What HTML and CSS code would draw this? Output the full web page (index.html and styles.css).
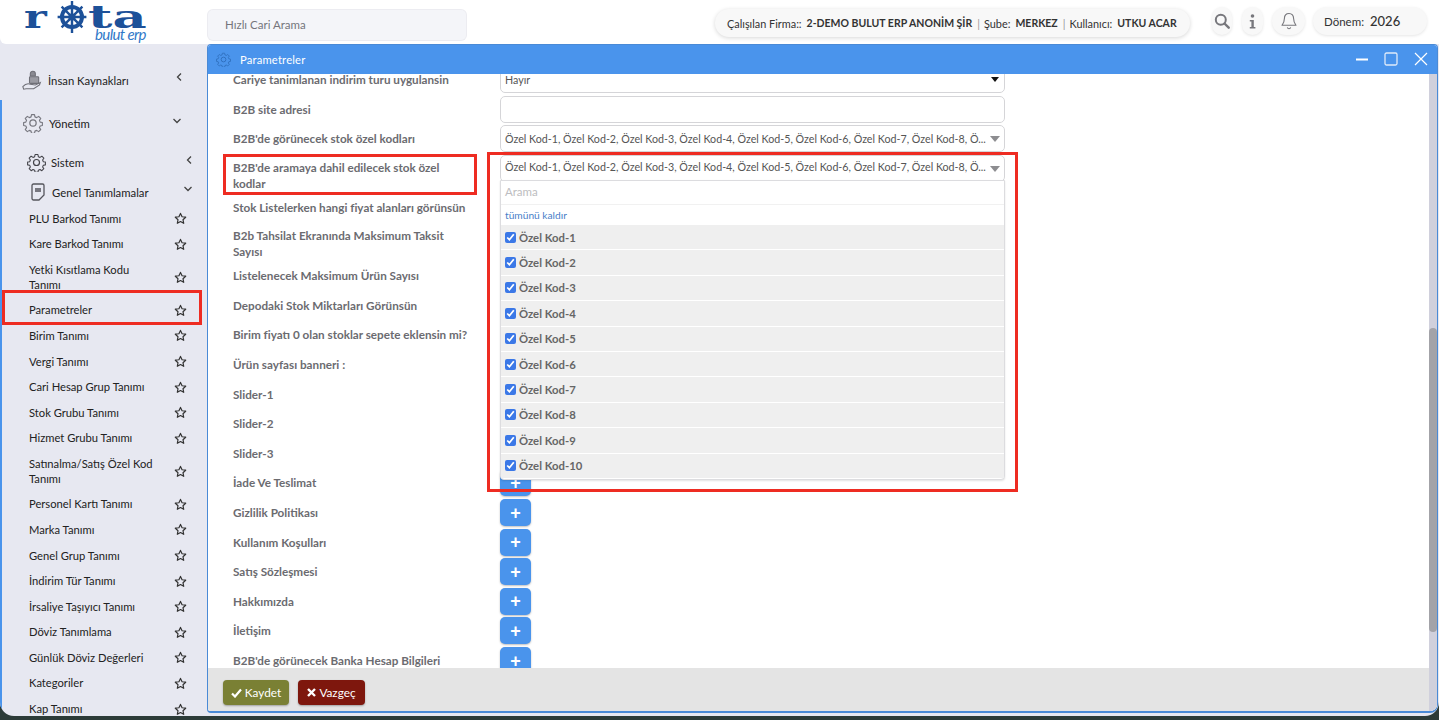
FILE: index.html
```html
<!DOCTYPE html>
<html lang="tr">
<head>
  <meta charset="UTF-8">
  <title>Rota Bulut ERP - Parametreler</title>
  <link rel="stylesheet" href="styles.css">
</head>
<body>
  <svg class="icon-defs" width="0" height="0">
    <symbol id="star" viewBox="0 0 24 24"><path d="M12 2.6l2.9 6.2 6.7.8-5 4.6 1.3 6.7-5.9-3.3-5.9 3.3 1.3-6.7-5-4.6 6.7-.8z" fill="none" stroke="currentColor" stroke-width="2.2" stroke-linejoin="round"/></symbol>
    <symbol id="gear" viewBox="0 0 24 24"><g fill="none" stroke="currentColor" stroke-width="1.5" stroke-linejoin="round"><circle cx="12" cy="12" r="3.8"/><path d="M10 1.5h4l.6 3 2.3 1 2.6-1.7 2.8 2.8-1.7 2.6 1 2.3 2.9.5v4l-2.900.6-1 2.200 1.700 2.600-2.800 2.800-2.600-1.700-2.300 1-.6 3h-4l-.6-3-2.300-1-2.600 1.700-2.800-2.800 1.700-2.600-1-2.200-2.900-.6v-4l2.900-.5 1-2.300-1.700-2.600 2.800-2.800 2.600 1.700 2.300-1z" transform="translate(1.2 .6) scale(.9)"/></g></symbol>
  </svg>

  <div class="app">
    <header class="topbar">
      <div class="logo">
        <div class="logo-main">
          <span class="logo-r">r</span>
          <svg class="logo-wheel" viewBox="0 0 40 40"><g fill="none" stroke="#1d5199"><circle cx="20" cy="20" r="12.5" stroke-width="5"/><path d="M20 0v40M2 20h36M7 7l26 26M33 7L7 33" stroke-width="3"/></g><circle cx="20" cy="20" r="4.5" fill="#1d5199"/></svg>
          <span class="logo-ta">ta</span>
        </div>
        <span class="logo-sub">bulut erp</span>
      </div>
      <div class="quick-search">Hızlı Cari Arama</div>
      <div class="info-pill">
        <span>Çalışılan Firma::</span><b>2-DEMO BULUT ERP ANONİM ŞİR</b><i>|</i>
        <span>Şube:</span><b>MERKEZ</b><i>|</i>
        <span>Kullanıcı:</span><b>UTKU ACAR</b>
      </div>
      <div class="round-btn btn-search">
        <svg width="16" height="16" viewBox="0 0 16 16"><circle cx="6.8" cy="6.8" r="5" fill="none" stroke="#77777c" stroke-width="2"/><path d="M10.5 10.5l4.2 4.2" stroke="#77777c" stroke-width="2.4" stroke-linecap="round"/></svg>
      </div>
      <div class="round-btn btn-info">
        <svg width="7" height="15" viewBox="0 0 7 15"><circle cx="3.5" cy="2" r="1.8" fill="#77777c"/><path d="M.8 6h4v7h1.6v1.6H.8V13h1.6V7.600H.8z" fill="#77777c"/></svg>
      </div>
      <div class="round-btn btn-bell">
        <svg width="16" height="18" viewBox="0 0 16 18"><path d="M8 1.5c-3 0-4.600 2.200-4.600 5 0 3.600-1 5-2.400 6.800h14c-1.400-1.800-2.400-3.200-2.400-6.800 0-2.800-1.600-5-4.600-5zM6.300 15.300c.3 1 1 1.400 1.700 1.400s1.400-.4 1.700-1.400" fill="none" stroke="#77777c" stroke-width="1.1" stroke-linejoin="round"/></svg>
      </div>
      <div class="period-pill"><span>Dönem:</span><b>2026</b></div>
    </header>

    <div class="main">
      <aside class="sidebar">
        <div class="menu-group group-hr">
          <svg class="group-icon" width="20" height="20" viewBox="0 0 24 24"><g fill="none" stroke="#6f6f77" stroke-width="1.3"><path d="M10 7V4.500a3 3 0 0 1 6 0V7z" fill="#8a8a92"/><rect x="9" y="8" width="11" height="8" rx="1" fill="#9a9aa2"/><path d="M1 20c3-3.500 6-4 9-3l6 1 6-3-1 3-7 4.500H5l-3 .5z"/></g></svg>
          <span>İnsan Kaynakları</span>
          <svg class="chev" width="8" height="10" viewBox="0 0 8 10"><path d="M6 1.500L2.500 5 6 8.500" fill="none" stroke="#444" stroke-width="1.3"/></svg>
        </div>
        <div class="menu-group group-mgmt">
          <svg class="group-icon" width="20" height="20"><use href="#gear" color="#77777f"/></svg>
          <span>Yönetim</span>
          <svg class="chev" width="10" height="8" viewBox="0 0 10 8"><path d="M1.500 2L5 5.500 8.500 2" fill="none" stroke="#444" stroke-width="1.3"/></svg>
        </div>
        <div class="menu-group group-sys">
          <svg class="group-icon" width="19" height="19"><use href="#gear" color="#44444a"/></svg>
          <span>Sistem</span>
          <svg class="chev" width="8" height="10" viewBox="0 0 8 10"><path d="M6 1.500L2.500 5 6 8.500" fill="none" stroke="#444" stroke-width="1.3"/></svg>
        </div>
        <div class="menu-group group-def">
          <svg class="group-icon" width="14" height="18" viewBox="0 0 14 18"><path d="M2.500 1h9A1.500 1.500 0 0 1 13 2.500V12l-5 5H2.500A1.500 1.500 0 0 1 1 15.500v-13A1.500 1.500 0 0 1 2.500 1z" fill="none" stroke="#55555c" stroke-width="1.3"/><rect x="4" y="5" width="6" height="4" fill="#77777f"/></svg>
          <span>Genel Tanımlamalar</span>
          <svg class="chev" width="10" height="8" viewBox="0 0 10 8"><path d="M1.500 2L5 5.500 8.500 2" fill="none" stroke="#444" stroke-width="1.3"/></svg>
        </div>
        <ul class="menu-list">
          <li>PLU Barkod Tanımı<svg><use href="#star"/></svg></li>
          <li>Kare Barkod Tanımı<svg><use href="#star"/></svg></li>
          <li class="two-line">Yetki Kısıtlama Kodu Tanımı<svg><use href="#star"/></svg></li>
          <li>Parametreler<svg><use href="#star"/></svg></li>
          <li>Birim Tanımı<svg><use href="#star"/></svg></li>
          <li>Vergi Tanımı<svg><use href="#star"/></svg></li>
          <li>Cari Hesap Grup Tanımı<svg><use href="#star"/></svg></li>
          <li>Stok Grubu Tanımı<svg><use href="#star"/></svg></li>
          <li>Hizmet Grubu Tanımı<svg><use href="#star"/></svg></li>
          <li class="two-line">Satınalma/Satış Özel Kod Tanımı<svg><use href="#star"/></svg></li>
          <li>Personel Kartı Tanımı<svg><use href="#star"/></svg></li>
          <li>Marka Tanımı<svg><use href="#star"/></svg></li>
          <li>Genel Grup Tanımı<svg><use href="#star"/></svg></li>
          <li>İndirim Tür Tanımı<svg><use href="#star"/></svg></li>
          <li>İrsaliye Taşıyıcı Tanımı<svg><use href="#star"/></svg></li>
          <li>Döviz Tanımlama<svg><use href="#star"/></svg></li>
          <li>Günlük Döviz Değerleri<svg><use href="#star"/></svg></li>
          <li>Kategoriler<svg><use href="#star"/></svg></li>
          <li>Kap Tanımı<svg><use href="#star"/></svg></li>
        </ul>
      </aside>

      <section class="window">
        <div class="window-title">
          <svg class="title-icon" width="15" height="15"><use href="#gear" color="#2f6fbd"/></svg>
          <span>Parametreler</span>
          <div class="window-actions">
            <svg width="12" height="12" viewBox="0 0 12 12"><path d="M0 6.500h12" stroke="#fff" stroke-width="2"/></svg>
            <svg width="14" height="14" viewBox="0 0 14 14"><rect x="1" y="1" width="12" height="12" rx="1.500" fill="none" stroke="#dfeaf9" stroke-width="1.3"/></svg>
            <svg width="14" height="14" viewBox="0 0 14 14"><path d="M1 1l12 12M13 1L1 13" stroke="#fff" stroke-width="1.2"/></svg>
          </div>
        </div>
        <div class="window-body">
          <div class="form">
            <div class="row"><label>Cariye tanimlanan indirim turu uygulansin</label><div class="control select">Hayır<span class="caret-dark"></span></div></div>
            <div class="row"><label>B2B site adresi</label><div class="control"></div></div>
            <div class="row"><label>B2B'de görünecek stok özel kodları</label><div class="control select">Özel Kod-1, Özel Kod-2, Özel Kod-3, Özel Kod-4, Özel Kod-5, Özel Kod-6, Özel Kod-7, Özel Kod-8, Ö...<span class="caret"></span></div></div>
            <div class="row two-line"><label>B2B'de aramaya dahil edilecek stok özel kodlar</label><div class="control select">Özel Kod-1, Özel Kod-2, Özel Kod-3, Özel Kod-4, Özel Kod-5, Özel Kod-6, Özel Kod-7, Özel Kod-8, Ö...<span class="caret"></span></div></div>
            <div class="row short"><label>Stok Listelerken hangi fiyat alanları görünsün</label></div>
            <div class="row two-line"><label>B2b Tahsilat Ekranında Maksimum Taksit Sayısı</label></div>
            <div class="row"><label>Listelenecek Maksimum Ürün Sayısı</label></div>
            <div class="row"><label>Depodaki Stok Miktarları Görünsün</label></div>
            <div class="row"><label>Birim fiyatı 0 olan stoklar sepete eklensin mi?</label></div>
            <div class="row"><label>Ürün sayfası banneri :</label></div>
            <div class="row"><label>Slider-1</label></div>
            <div class="row"><label>Slider-2</label></div>
            <div class="row"><label>Slider-3</label></div>
            <div class="row"><label>İade Ve Teslimat</label><button class="plus">+</button></div>
            <div class="row"><label>Gizlilik Politikası</label><button class="plus">+</button></div>
            <div class="row"><label>Kullanım Koşulları</label><button class="plus">+</button></div>
            <div class="row"><label>Satış Sözleşmesi</label><button class="plus">+</button></div>
            <div class="row"><label>Hakkımızda</label><button class="plus">+</button></div>
            <div class="row"><label>İletişim</label><button class="plus">+</button></div>
            <div class="row"><label>B2B'de görünecek Banka Hesap Bilgileri</label><button class="plus">+</button></div>
          </div>

          <div class="dropdown">
            <div class="dd-search">Arama</div>
            <div class="dd-clear">tümünü kaldır</div>
            <label class="dd-item"><input type="checkbox" checked>Özel Kod-1</label>
            <label class="dd-item"><input type="checkbox" checked>Özel Kod-2</label>
            <label class="dd-item"><input type="checkbox" checked>Özel Kod-3</label>
            <label class="dd-item"><input type="checkbox" checked>Özel Kod-4</label>
            <label class="dd-item"><input type="checkbox" checked>Özel Kod-5</label>
            <label class="dd-item"><input type="checkbox" checked>Özel Kod-6</label>
            <label class="dd-item"><input type="checkbox" checked>Özel Kod-7</label>
            <label class="dd-item"><input type="checkbox" checked>Özel Kod-8</label>
            <label class="dd-item"><input type="checkbox" checked>Özel Kod-9</label>
            <label class="dd-item"><input type="checkbox" checked>Özel Kod-10</label>
          </div>
        </div>
        <div class="window-footer">
          <button class="btn-save"><svg width="11" height="10" viewBox="0 0 11 10"><path d="M1 5.500L4 8.500 10 1.500" fill="none" stroke="#fff" stroke-width="2.2"/></svg>Kaydet</button>
          <button class="btn-cancel"><svg width="9" height="9" viewBox="0 0 9 9"><path d="M1 1l7 7M8 1L1 8" stroke="#fff" stroke-width="2.4"/></svg>Vazgeç</button>
        </div>
        <div class="scrollbar"><div class="scroll-thumb"></div></div>
      </section>
    </div>
  </div>

  <!-- kirmizi isaretler -->
  <div class="mark mark-menu"></div>
  <div class="mark mark-label"></div>
  <div class="mark mark-dropdown"></div>
</body>
</html>
```

FILE: styles.css
```css
html, body {
  margin: 0;
  height: 720px;
  overflow: hidden;
}

body {
  position: relative;
  font-family: "Lato", "Noto Sans", sans-serif;
  background: #2c3b38;
  color: #333;
}

.icon-defs {
  position: absolute;
}

.app {
  height: 716px;
  overflow: hidden;
  background: #e7e8f1;
  border-radius: 0 0 14px 14px;
}

/* Top bar */
.topbar {
  height: 44px;
  display: flex;
  align-items: flex-start;
  background: #fff;
  border-radius: 0 0 0 6px;
}

.logo {
  position: relative;
  flex: none;
  width: 208px;
  height: 44px;
  color: #1d5199;
}

.logo-main {
  display: flex;
  align-items: center;
  height: 34px;
  padding-left: 24px;
  font-family: "DejaVu Serif", serif;
  font-weight: 700;
  font-size: 32px;
  line-height: 32px;
}

.logo-r, .logo-ta {
  display: inline-block;
  transform-origin: left center;
  transform: scaleX(1.35);
}

.logo-r { width: 32px; }
.logo-ta { margin-left: 0; transform: scaleX(1.65); }

.logo-wheel {
  width: 32px;
  height: 32px;
  flex: none;
}

.logo-sub {
  position: absolute;
  left: 95px;
  top: 25px;
  font-size: 15px;
  line-height: 18px;
  font-style: italic;
  color: #2f78c8;
  letter-spacing: -0.6px;
}

.quick-search {
  flex: none;
  width: 241px;
  height: 30px;
  margin-top: 10px;
  padding-left: 17px;
  line-height: 30px;
  background: #f4f5f9;
  border-radius: 5px;
  box-shadow: 0 0 0 1px #ececf1;
  font-size: 11.5px;
  color: #75757c;
}

.info-pill {
  flex: none;
  display: flex;
  align-items: center;
  width: 475px;
  height: 28px;
  box-sizing: border-box;
  margin: 9px 0 0 249px;
  padding: 0 12px;
  background: #f8f8f8;
  border-radius: 14px;
  box-shadow: 0 1px 4px rgba(0, 0, 0, 0.16);
  font-size: 10.9px;
  white-space: nowrap;
}

.info-pill b {
  margin-left: 5px;
  font-size: 10.5px;
  font-weight: 700;
}

.info-pill i {
  margin: 0 4px 0 5px;
  font-style: normal;
  color: #999;
}

.round-btn {
  flex: none;
  height: 28px;
  margin-top: 7px;
  display: flex;
  align-items: center;
  justify-content: center;
  background: #f8f8f8;
  border-radius: 14px;
  box-shadow: 0 1px 3px rgba(0, 0, 0, 0.1);
}

.btn-search { width: 20px; margin-left: 22px; }
.btn-info { width: 21px; margin-left: 10px; }
.btn-bell { width: 33px; margin-left: 9px; }

.period-pill {
  flex: none;
  width: 114px;
  height: 28px;
  margin: 7px 0 0 8px;
  padding-left: 11px;
  box-sizing: border-box;
  display: flex;
  align-items: center;
  gap: 6px;
  background: #f8f8f8;
  border-radius: 14px;
  box-shadow: 0 1px 3px rgba(0, 0, 0, 0.1);
  font-size: 11.5px;
}

.period-pill b {
  font-weight: 500;
  font-size: 13px;
}

/* Layout */
.main {
  display: flex;
  height: 672px;
}

.sidebar {
  width: 207px;
  flex: none;
  height: 672px;
  overflow: hidden;
  background: linear-gradient(to right, #4a94ec 2px, transparent 2px) 0 56px no-repeat;
  color: #222;
}

.menu-group {
  position: relative;
  display: flex;
  align-items: center;
  font-size: 11.3px;
}

.menu-group .chev {
  position: absolute;
}

.group-hr {
  height: 26px;
  margin-top: 23px;
  padding-left: 22px;
}

.group-hr span { margin-left: 6px; }
.group-hr .chev { left: 175px; top: 5px; }

.group-mgmt {
  height: 26px;
  margin-top: 17px;
  padding-left: 23px;
}

.group-mgmt span { margin-left: 6px; }
.group-mgmt .chev { left: 172px; top: 7px; }

.group-sys {
  height: 22px;
  margin-top: 15px;
  padding-left: 27px;
}

.group-sys span { margin-left: 5px; }
.group-sys .chev { left: 185px; top: 4px; }

.group-def {
  height: 22px;
  margin-top: 8px;
  padding-left: 31px;
}

.group-def span { margin-left: 7px; }
.group-def .chev { left: 183px; top: 4px; }

.menu-list {
  list-style: none;
  margin: 2.5px 0 0;
  padding: 0;
  font-size: 11.2px;
}

.menu-list li {
  position: relative;
  height: 25.6px;
  padding: 0 50px 0 29px;
  display: flex;
  align-items: center;
}

.menu-list li.two-line {
  height: 40.4px;
  line-height: 15px;
}

.menu-list svg {
  position: absolute;
  right: 20px;
  top: 50%;
  width: 13px;
  height: 13px;
  margin-top: -6px;
  color: #333;
}

/* Window */
.window {
  position: relative;
  flex: none;
  width: 1231px;
  height: 669px;
  display: flex;
  flex-direction: column;
  box-sizing: border-box;
  border: 1px solid #4a8ad6;
  border-bottom-width: 2px;
  border-radius: 4px 4px 8px 4px;
  background: #fff;
  overflow: hidden;
}

.window-title {
  height: 29px;
  flex: none;
  display: flex;
  align-items: center;
  box-sizing: border-box;
  padding: 0 0 1px 8px;
  background: #4a94ec;
  color: #fff;
  font-size: 11.2px;
  letter-spacing: 0.2px;
}

.title-icon {
  margin-right: 9px;
}

.window-actions {
  margin-left: auto;
  margin-right: 9px;
  display: flex;
  align-items: center;
  gap: 16px;
}

.window-body {
  position: relative;
  flex: 1;
  overflow: hidden;
}

.form {
  margin-top: -8px;
  padding-left: 25px;
  font-size: 11.7px;
}

.row {
  display: flex;
  align-items: flex-start;
  height: 29.6px;
}

.row.two-line {
  height: 39.5px;
}

.row.short {
  height: 28.5px;
}

.row label {
  width: 236px;
  flex: none;
  margin-right: 31px;
  padding-top: 5px;
  line-height: 16px;
  font-weight: 700;
  color: #6b6b70;
}

.row.two-line label {
  padding-top: 4px;
}

.control {
  position: relative;
  width: 505px;
  height: 27px;
  box-sizing: border-box;
  padding: 0 24px 0 4px;
  line-height: 25px;
  background: #fff;
  border: 1px solid #d5d5d8;
  border-radius: 5px;
  font-size: 10.7px;
  color: #555;
  white-space: nowrap;
  overflow: hidden;
}

.row.two-line .control {
  line-height: 22px;
}

.caret, .caret-dark {
  position: absolute;
  right: 4px;
  top: 10px;
  border-left: 5px solid transparent;
  border-right: 5px solid transparent;
  border-top: 6px solid #8d8d90;
}

.caret-dark {
  right: 5px;
  top: 10px;
  border-left-width: 4px;
  border-right-width: 4px;
  border-top: 5px solid #111;
}

.plus {
  width: 31px;
  height: 27px;
  padding: 0;
  border: none;
  border-radius: 5px;
  background: #4a94ec;
  box-shadow: 0 1px 2px rgba(0, 0, 0, 0.25);
  color: #fff;
  font-family: "Liberation Sans", sans-serif;
  font-size: 18px;
  font-weight: 700;
  line-height: 26px;
}

/* Dropdown over the form */
.dropdown {
  position: absolute;
  left: 292px;
  top: 106px;
  width: 505px;
  box-sizing: border-box;
  background: #fff;
  border: 1px solid #dcdcdf;
  border-radius: 0 0 4px 4px;
  box-shadow: 0 1px 2px rgba(0, 0, 0, 0.12);
}

.dd-search {
  height: 23px;
  padding-left: 4px;
  line-height: 21px;
  border-bottom: 1px solid #f1f1f1;
  font-size: 11.5px;
  color: #bdbdc0;
}

.dd-clear {
  height: 20px;
  padding-left: 4px;
  line-height: 20px;
  font-size: 10.2px;
  color: #4a80c8;
}

.dd-item {
  display: flex;
  align-items: center;
  height: 24.4px;
  margin-bottom: 1px;
  padding-left: 4px;
  background: #efefef;
  font-size: 11.3px;
  font-weight: 700;
  color: #666;
}

.dd-item input {
  width: 11px;
  height: 11px;
  margin: 0 3px 0 0;
  accent-color: #3b78e7;
}

.scrollbar {
  position: absolute;
  right: 0;
  top: 29px;
  bottom: 0;
  width: 8px;
  background: #d0d0dc;
}

.scroll-thumb {
  margin-top: 254px;
  height: 304px;
  border-radius: 4px;
  background: #a3a3a8;
}

/* Footer */
.window-footer {
  height: 43px;
  flex: none;
  display: flex;
  align-items: flex-start;
  gap: 9px;
  box-sizing: border-box;
  padding: 12px 0 0 15px;
  background: #e4e4e4;
}

.window-footer button {
  height: 25px;
  display: flex;
  align-items: center;
  justify-content: center;
  gap: 3px;
  padding: 0;
  border: none;
  border-radius: 4px;
  box-shadow: 0 1px 2px rgba(0, 0, 0, 0.3);
  color: #fff;
  font-family: inherit;
  font-size: 11.8px;
}

.btn-save { width: 66px; background: #7a8034; }
.btn-cancel { width: 67px; background: #7e170d; }

/* Red annotation boxes */
.mark {
  position: absolute;
  z-index: 2;
  box-sizing: border-box;
  border: 3px solid #ee2c22;
}

.mark-menu { left: 2px; top: 290px; width: 200px; height: 35px; }
.mark-label { left: 223px; top: 154px; width: 254px; height: 41px; }
.mark-dropdown { left: 487px; top: 152px; width: 531px; height: 340px; }
```
